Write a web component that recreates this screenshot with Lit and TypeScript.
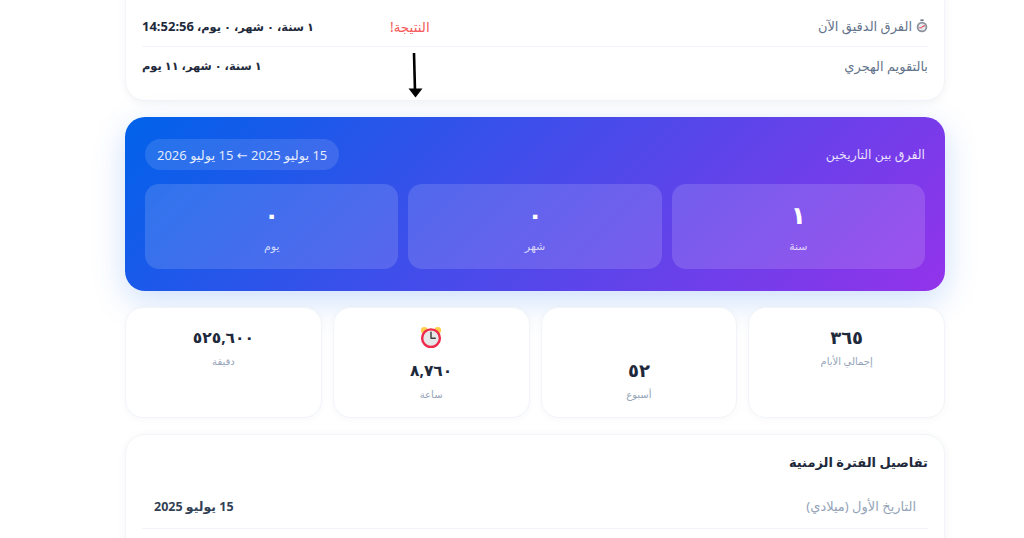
import { LitElement, html, css, svg } from "lit";
import { customElement } from "lit/decorators.js";

const alarm = html`<svg class="emoji" viewBox="0 0 36 36" aria-hidden="true">
  <circle cx="7" cy="7" r="5.5" fill="#ffcc4d"/><circle cx="29" cy="7" r="5.5" fill="#ffcc4d"/>
  <circle cx="18" cy="20" r="14.5" fill="#e6e7e8" stroke="#ef2b4d" stroke-width="4"/>
  ${svg`<path d="M18 10v10h7" fill="none" stroke="#414042" stroke-width="2.4" stroke-linecap="round" stroke-linejoin="round"/>`}
</svg>`;

const stopwatch = html`<svg class="watch" viewBox="0 0 12 14" aria-hidden="true">
  <rect x="4.4" y="0.4" width="3.2" height="1.6" fill="#6b7280"/>
  <circle cx="6" cy="8" r="5.3" fill="#8b929c"/>
  <circle cx="6" cy="8" r="3.5" fill="#e8eaed"/>
  <path d="M6 8l2.8-1.6M3.2 8.8h2.8" stroke="#e0455a" stroke-width="1.1" fill="none"/>
</svg>`;

@customElement("app-root")
export class AppRoot extends LitElement {
  static styles = css`
    :host {
      display: block;
      height: 538px;
      overflow: hidden;
      position: relative;
      background: #fff;
      font-family: "Noto Sans", "DejaVu Sans", sans-serif;
      color: #1e293b;
    }
    .page {
      direction: rtl;
      width: 820px;
      margin: -20px 0 0 125px;
      display: flex;
      flex-direction: column;
      gap: 16px;
    }
    .card {
      background: #fff;
      border: 1px solid #f1f5f9;
      border-radius: 20px;
      box-shadow: 0 2px 10px rgba(15, 23, 42, 0.05);
      padding: 0 16px;
    }
    .top { padding: 25px 16px 14px; }
    .row {
      display: flex;
      justify-content: space-between;
      align-items: center;
      height: 40px;
      box-sizing: border-box;
      font-size: 13px;
    }
    .row + .row { border-top: 1px solid #f1f5f9; padding-bottom: 2px; }
    .lbl { color: #64748b; display: flex; align-items: center; gap: 4px; }
    .val { font-weight: 700; font-size: 11.4px; color: #1e293b; }
    .val .latin { font-size: 13px; }
    .watch { width: 12px; height: 14px; }
    .hero {
      border-radius: 20px;
      padding: 22px 20px;
      height: 174px;
      box-sizing: border-box;
      background: linear-gradient(135deg, #0062ea 0%, #9333ea 100%);
      box-shadow: 0 10px 34px rgba(0, 98, 234, 0.2);
      color: #fff;
    }
    .hero-head {
      display: flex;
      justify-content: space-between;
      align-items: center;
      margin-bottom: 14px;
    }
    .hero-title { font-size: 12.5px; font-weight: 400; color: rgba(255,255,255,.85); }
    .pill {
      background: rgba(255,255,255,.12);
      border-radius: 16px;
      height: 31px;
      padding: 0 12px;
      display: flex;
      align-items: center;
      font-size: 13px;
      color: rgba(255,255,255,.88);
    }
    .tiles { display: grid; grid-template-columns: repeat(3, 1fr); gap: 10px; }
    .tile {
      height: 85px;
      background: rgba(255,255,255,.14);
      border-radius: 14px;
      display: flex;
      flex-direction: column;
      align-items: center;
      justify-content: center;
    }
    .tile b { font-size: 25px; font-weight: 700; line-height: 36px; }
    .tile span { font-size: 11px; color: rgba(255,255,255,.75); line-height: 22px; margin-top: 3px; }
    .stats { display: grid; grid-template-columns: repeat(4, 1fr); gap: 11px; }
    .stat {
      height: 111px;
      box-sizing: border-box;
      background: #fff;
      border: 1px solid #f1f5f9;
      border-radius: 18px;
      box-shadow: 0 2px 8px rgba(15, 23, 42, 0.03);
      display: flex;
      flex-direction: column;
      align-items: center;
      padding-top: 14px;
    }
    .slot { height: 33px; display: flex; align-items: flex-start; justify-content: center; }
    .emoji { width: 22px; height: 22px; margin-top: 4px; }
    .stat b { font-size: 18px; font-weight: 700; line-height: 30px; color: #1e293b; }
    .stat b.long { font-size: 15.5px; }
    .stat span { font-size: 10px; color: #94a3b8; line-height: 18px; }
    .details { padding: 0 16px; height: 140px; box-sizing: border-box; }
    .details h3 { margin: 0; padding-top: 15px; font-size: 13px; line-height: 24px; font-weight: 700; color: #1e293b; }
    .drow {
      display: flex;
      justify-content: space-between;
      align-items: center;
      height: 53px;
      padding: 8px 12px 0;
      box-sizing: border-box;
      border-bottom: 1px solid #f1f5f9;
      font-size: 13px;
      margin-top: 2px;
    }
    .drow .d1 { color: #94a3b8; }
    .drow .d2 { font-weight: 700; font-size: 12.5px; color: #334155; }
    .note {
      position: absolute;
      left: 390px;
      top: 18px;
      direction: rtl;
      font-size: 13.5px;
      line-height: 18px;
      color: #f65a5a;
    }
    .arrow { position: absolute; left: 405px; top: 51px; width: 20px; height: 48px; }
  `;

  render() {
    return html`
      <div class="page">
        <section class="card top">
          <div class="row">
            <div class="lbl">${stopwatch}<span>الفرق الدقيق الآن</span></div>
            <div class="val">١ سنة، ٠ شهر، ٠ يوم، <span class="latin">14:52:56</span></div>
          </div>
          <div class="row">
            <div class="lbl">بالتقويم الهجري</div>
            <div class="val">١ سنة، ٠ شهر، ١١ يوم</div>
          </div>
        </section>
        <section class="hero">
          <div class="hero-head">
            <div class="hero-title">الفرق بين التاريخين</div>
            <div class="pill">15 يوليو 2025 ← 15 يوليو 2026</div>
          </div>
          <div class="tiles">
            <div class="tile"><b>١</b><span>سنة</span></div>
            <div class="tile"><b>٠</b><span>شهر</span></div>
            <div class="tile"><b>٠</b><span>يوم</span></div>
          </div>
        </section>
        <section class="stats">
          <div class="stat"><b>٣٦٥</b><span>إجمالي الأيام</span></div>
          <div class="stat"><div class="slot"></div><b>٥٢</b><span>أسبوع</span></div>
          <div class="stat"><div class="slot">${alarm}</div><b class="long">٨,٧٦٠</b><span>ساعة</span></div>
          <div class="stat"><b class="long">٥٢٥,٦٠٠</b><span>دقيقة</span></div>
        </section>
        <section class="card details">
          <h3>تفاصيل الفترة الزمنية</h3>
          <div class="drow"><span class="d1">التاريخ الأول (ميلادي)</span><span class="d2">15 يوليو 2025</span></div>
        </section>
      </div>
      <div class="note">النتيجة!</div>
      <svg class="arrow" viewBox="0 0 20 48" aria-hidden="true">
        <path d="M9 2l1 38" stroke="#000" stroke-width="2.6" fill="none"/>
        <path d="M3.5 37.5h14l-7 9z" fill="#000"/>
      </svg>
    `;
  }
}
